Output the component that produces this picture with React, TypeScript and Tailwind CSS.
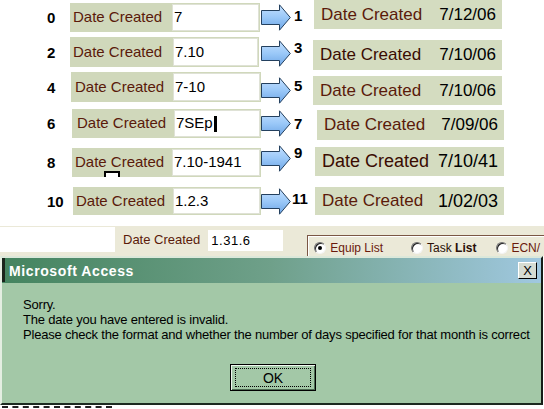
import React, { useId } from 'react';

type RowSpec = {
  band: string;
  n: string;
  lMt: string;
  box: string;
  label: string;
  input: string;
  v: string;
  aMt: string;
  rnCls: string;
  rn: string;
  rBox: string;
  rLabel: string;
  rVal: string;
  rv: string;
  cursor?: boolean;
  mark?: boolean;
};

const rows: RowSpec[] = [
  {
    band: 'h-[35px]', n: '0', lMt: 'mt-[3px]', box: 'ml-0 h-[29px]', label: 'w-[102px] pl-[3px]', input: 'w-[87px]', v: '7',
    aMt: 'mt-[4px]', rnCls: 'mt-[8px] pl-[3px]', rn: '1',
    rBox: 'mt-0 ml-[1px] w-[188px] h-[29px]', rLabel: 'text-[17px] text-[#5a1a0a]', rVal: 'text-[17px]', rv: '7/12/06',
  },
  {
    band: 'h-[36px]', n: '2', lMt: 'mt-[2px]', box: 'ml-0 h-[30px]', label: 'w-[103px] pl-[3px]', input: 'w-[85px]', v: '7.10',
    aMt: 'mt-[5px]', rnCls: 'mt-[5px] pl-[3px]', rn: '3',
    rBox: 'mt-[5px] ml-0 w-[189px] h-[30px]', rLabel: 'text-[17px] text-[#3a0c02]', rVal: 'text-[17px]', rv: '7/10/06',
  },
  {
    band: 'h-[36px]', n: '4', lMt: 'mt-[1px]', box: 'ml-[2px] h-[30px]', label: 'w-[102px] pl-[4px]', input: 'w-[87px]', v: '7-10',
    aMt: 'mt-[6px]', rnCls: 'mt-[7px] pl-[3px]', rn: '5',
    rBox: 'mt-[5px] ml-0 w-[189px] h-[29px]', rLabel: 'text-[17px] text-[#5a1a0a]', rVal: 'text-[17px]', rv: '7/10/06',
  },
  {
    band: 'h-[37px]', n: '6', lMt: 'mt-[2px]', box: 'ml-[3px] h-[29px]', label: 'w-[102px] pl-[5px]', input: 'w-[86px]', v: '7SEp',
    aMt: 'mt-[3px]', rnCls: 'mt-[9px] pl-[3px]', rn: '7',
    rBox: 'mt-[3px] ml-[4px] w-[187px] h-[30px]', rLabel: 'text-[17px] text-[#5a1a0a]', rVal: 'text-[17px]', rv: '7/09/06',
    cursor: true,
  },
  {
    band: 'h-[38px]', n: '8', lMt: 'mt-[4px]', box: 'ml-[3px] h-[29px]', label: 'w-[100px] pl-[3px]', input: 'w-[88px]', v: '7.10-1941',
    aMt: 'mt-[1px]', rnCls: 'mt-[1px] pl-[3px]', rn: '9',
    rBox: 'mt-[3px] ml-[2px] w-[189px] h-[29px]', rLabel: 'text-[18px] text-[#3a0c02]', rVal: 'text-[18px]', rv: '7/10/41',
    mark: true,
  },
  {
    band: 'h-[38px]', n: '10', lMt: 'mt-[5px]', box: 'ml-[3px] h-[28px]', label: 'w-[100px] pl-[3px]', input: 'w-[87px]', v: '1.2.3',
    aMt: 'mt-[6px]', rnCls: 'mt-[9px] pl-[1px]', rn: '11',
    rBox: 'mt-[5px] ml-[2px] w-[189px] h-[28px]', rLabel: 'text-[17px] text-[#5a1a0a]', rVal: 'text-[18px]', rv: '1/02/03',
  },
];

function Arrow() {
  const id = useId();
  return (
    <svg width="30" height="27" viewBox="0 0 30 27" className="block">
      <defs>
        <linearGradient id={id} x1="0" y1="0" x2="0" y2="1">
          <stop offset="0" stopColor="#c4e0ff" />
          <stop offset="0.5" stopColor="#9ac8f8" />
          <stop offset="1" stopColor="#6ea6e6" />
        </linearGradient>
      </defs>
      <path
        d="M0.5 6.5 H18.5 V0.8 L29.3 13.5 L18.5 26.2 V20.5 H0.5 Z"
        fill={`url(#${id})`}
        stroke="#24405e"
        strokeWidth="1"
      />
    </svg>
  );
}

function Radio({ on }: { on?: boolean }) {
  return (
    <span className="flex h-[12px] w-[12px] shrink-0 items-center justify-center rounded-full border border-t-[#6f6f6f] border-l-[#6f6f6f] border-r-[#f4f4f4] border-b-[#f4f4f4] bg-white shadow-[inset_1px_1px_0_#202020]">
      {on && <span className="h-[4px] w-[4px] rounded-full bg-black" />}
    </span>
  );
}

export default function App() {
  return (
    <div className="h-[409px] w-[544px] overflow-hidden bg-white font-['Liberation_Sans',Arial,sans-serif] text-black">
      {/* comparison rows */}
      <div className="flex flex-col">
        {rows.map((r) => (
          <div key={r.n} className={`flex items-start ${r.band}`}>
            <div className={`flex w-[261px] shrink-0 items-center pl-[47px] ${r.lMt}`}>
              <span className="w-[23px] text-[15px] font-bold leading-[15px]">{r.n}</span>
              <div className={`flex bg-[#d0d8bb] ${r.box}`}>
                <div className={`relative flex items-center text-[15px] text-[#5a1a0a] ${r.label}`}>
                  Date Created
                  {r.mark && (
                    <span className="absolute left-[32px] top-[23px] h-[6px] w-[16px] border-2 border-b-0 border-black bg-white" />
                  )}
                </div>
                <div className={`my-[1px] mr-[1px] flex items-center border border-[#dfe2d6] bg-white pl-[1px] text-[15px] ${r.input}`}>
                  {r.v}
                  {r.cursor && <span className="ml-[1px] h-[16px] w-[3px] bg-black" />}
                </div>
              </div>
            </div>
            <div className={`shrink-0 ${r.aMt}`}>
              <Arrow />
            </div>
            <span className={`w-[22px] shrink-0 text-[15px] font-bold leading-[15px] ${r.rnCls}`}>{r.rn}</span>
            <div className={`flex items-center justify-between bg-[#d4dcc0] pl-[7px] pr-[6px] ${r.rBox}`}>
              <span className={r.rLabel}>Date Created</span>
              <span className={r.rVal}>{r.rv}</span>
            </div>
          </div>
        ))}
      </div>

      {/* form strip behind the dialog */}
      <div className="mt-[6px] flex h-[30px] items-start bg-[#ebe9d8]">
        <div className="mt-[1px] h-[25px] w-[115px] shrink-0 bg-white" />
        <span className="ml-[8px] mt-[6px] whitespace-nowrap text-[13px] leading-[15px] text-[#5a1a0a]">Date Created</span>
        <div className="ml-[8px] mt-[4px] flex h-[21px] w-[75px] shrink-0 items-center bg-white pl-[3px] text-[13px] tracking-[0.5px]">
          1.31.6
        </div>
        <div className="ml-[24px] mt-[9px] flex h-[21px] min-w-0 flex-1 items-start whitespace-nowrap border-l border-t border-[#7a5644] pl-[6px] pt-[6px] shadow-[inset_1px_1px_0_#ffffff]">
          <Radio on />
          <span className="ml-[4px] text-[12px] leading-[13px] text-[#6a1a0c]">Equip List</span>
          <span className="ml-[28px] shrink-0">
            <Radio />
          </span>
          <span className="ml-[4px] text-[12px] leading-[13px] text-[#2a1008]">
            Task <b>List</b>
          </span>
          <span className="ml-[20px] shrink-0">
            <Radio />
          </span>
          <span className="ml-[3px] text-[12px] leading-[13px] text-[#6a1a0c]">ECN/</span>
        </div>
      </div>

      {/* Microsoft Access dialog */}
      <div className="w-[543px] border-2 border-l-[#e4eee2] border-t-[#dce8da] border-r-[#141c16] border-b-[#1c2a20] bg-[#a3c8a7]">
        <div className="flex h-[25px] items-start bg-linear-to-r from-[#44845f] via-[#6fa08a] to-[#a0c8e0]">
          <div className="h-[24px] w-[3px] shrink-0 bg-[#1a241c]" />
          <span className="ml-[4px] mt-[6px] text-[14px] font-bold leading-[14px] tracking-[0.6px] text-white">
            Microsoft Access
          </span>
          <div className="ml-auto mr-[4px] mt-[4px] flex h-[17px] w-[19px] items-center justify-center border border-t-white border-l-white border-r-black border-b-black bg-[#d6dcd2] text-[13px] leading-[13px] text-black">
            X
          </div>
        </div>
        <div className="flex h-[120px] flex-col pl-[21px] pt-[14px]">
          <div className="text-[13px] leading-[15px] tracking-[-0.2px]">Sorry.</div>
          <div className="text-[13px] leading-[15px] tracking-[-0.2px]">The date you have entered is invalid.</div>
          <div className="text-[13px] leading-[15px] tracking-[-0.2px]">
            Please check the format and whether the number of days specified for that month is correct
          </div>
          <div className="mt-[22px] ml-[207px] flex h-[27px] w-[86px] items-center justify-center border border-black shadow-[inset_1px_1px_0_#eef6ee,inset_-1px_-1px_0_#4d6b52]">
            <div className="flex h-[19px] w-[76px] items-center justify-center border border-dotted border-black text-[14px] leading-[14px]">
              OK
            </div>
          </div>
        </div>
      </div>

      {/* tops of the form text hidden under the dialog */}
      <div className="ml-[2px] mt-[1px] w-[110px] border-t-2 border-dashed border-[#222222]" />
    </div>
  );
}
